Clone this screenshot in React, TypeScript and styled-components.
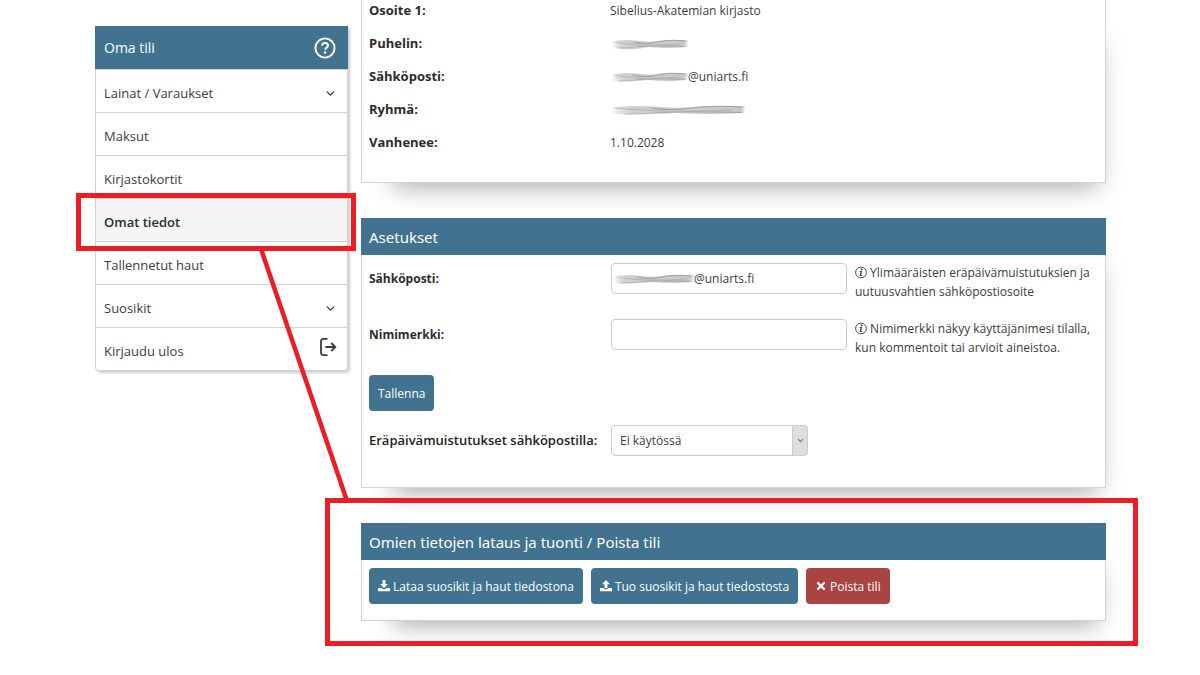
import React from "react";
import styled, { createGlobalStyle, css } from "styled-components";
import { FaTimes } from "react-icons/fa";
import { ChevronDown } from "lucide-react";

const blue = "#417391";
const line = "#d2d2d2";
const red = "#ee1c24";

const GlobalStyle = createGlobalStyle`
  *, *::before, *::after { box-sizing: border-box; }
  body {
    margin: 0;
    background: #fff;
    color: #3c3c3c;
    font-family: "Open Sans", "Noto Sans", sans-serif;
    font-size: 12px;
    line-height: 19px;
  }
  button, input, select { font: inherit; color: inherit; }
`;

const Page = styled.div`
  display: grid;
  grid-template-columns: 253px minmax(0, 1fr);
  gap: 13px;
  align-items: start;
  padding: 0 94px 18px 95px;
  overflow: hidden;
`;

const Sidebar = styled.nav`
  margin-top: 26px;
  border: 1px solid ${line};
  border-top: 0;
  border-radius: 0 0 4px 4px;
  box-shadow: 2px 2px 3px rgba(0, 0, 0, 0.2);
  font-size: 13px;
`;

const SidebarHeader = styled.div`
  display: flex;
  align-items: center;
  justify-content: space-between;
  height: 43px;
  margin: 0 -1px;
  padding: 0 12px 0 9px;
  background: ${blue};
  color: #fff;
  font-size: 14px;
`;

const HelpButton = styled.button`
  display: flex;
  padding: 0;
  border: 0;
  background: none;
  color: #fff;
`;

const MenuList = styled.ul`
  margin: 0;
  padding: 0;
  list-style: none;
`;

const MenuItem = styled.li<{ $active?: boolean }>`
  position: relative;
  border-top: 1px solid ${line};
  ${(p) => p.$active && css`
    background: #f5f5f5;
    font-weight: 600;
    color: #2c2c2c;
  `}
`;

const MenuLink = styled.a`
  display: flex;
  align-items: center;
  justify-content: space-between;
  height: 42px;
  padding: 4px 10px 0 8px;
  color: inherit;
  text-decoration: none;
`;

const OutIcon = styled.svg`
  margin-bottom: 8px;
`;

const ItemMark = styled.span`
  position: absolute;
  inset: -6px -9px -10px -20px;
  z-index: 2;
  border: 5px solid ${red};
  pointer-events: none;
`;

const Connector = styled.svg`
  position: absolute;
  top: 50px;
  left: 160px;
  z-index: 2;
  pointer-events: none;
`;

const Content = styled.main`
  min-width: 0;
`;

const Panel = styled.section<{ $continued?: boolean }>`
  position: relative;
  margin-bottom: 35px;
  border: 1px solid ${line};
  ${(p) => p.$continued && "border-top: 0;"}
  background: #fff;
  box-shadow: 12px 24px 24px -20px rgba(0, 0, 0, 0.34);
`;

const PanelMark = styled.span`
  position: absolute;
  inset: -26px -33px -26px -37px;
  z-index: 2;
  border: 5px solid ${red};
  pointer-events: none;
`;

const PanelTitle = styled.h2`
  margin: -1px -1px 0;
  padding: 6px 8px 5px;
  background: ${blue};
  color: #fff;
  font-family: "Noto Sans", "Open Sans", sans-serif;
  font-size: 15px;
  font-weight: 400;
  line-height: 26px;
`;

const Details = styled.dl`
  display: grid;
  grid-template-columns: 241px minmax(0, 1fr);
  grid-auto-rows: 33px;
  margin: 0;
  padding: 0 7px 17px;
  line-height: 21px;
`;

const Term = styled.dt`
  color: #2c2c2c;
  font-size: 13px;
  font-weight: 700;
`;

const Value = styled.dd`
  display: flex;
  align-items: flex-start;
  margin: 0;
  svg { margin-top: 3px; }
`;

const Settings = styled.form`
  display: grid;
  grid-template-columns: 242px minmax(0, 1fr);
  row-gap: 14px;
  padding: 8px 7px 31px;
`;

const FieldLabel = styled.label<{ $large?: boolean }>`
  padding-top: 6px;
  color: ${(p) => (p.$large ? "#222" : "#2c2c2c")};
  font-size: ${(p) => (p.$large ? 13 : 12)}px;
  font-weight: ${(p) => (p.$large ? 600 : 700)};
`;

const FieldRow = styled.div`
  display: grid;
  grid-template-columns: 236px minmax(0, 1fr);
  gap: 8px;
  min-height: 42px;
  align-items: start;
`;

const InputWrap = styled.div`
  position: relative;
  display: flex;
`;

const TextInput = styled.input<{ $masked?: boolean }>`
  width: 100%;
  height: 31px;
  padding: 0 8px 0 ${(p) => (p.$masked ? 82 : 8)}px;
  border: 1px solid #ccc;
  border-radius: 4px;
  background: #fff;
`;

const InputSmudge = styled.span`
  position: absolute;
  top: 8px;
  left: 1px;
  display: flex;
`;

const Hint = styled.p`
  margin: 0;
  svg { vertical-align: -2px; }
`;

const SelectWrap = styled.div`
  position: relative;
  width: 197px;
`;

const Select = styled.select`
  display: block;
  width: 100%;
  height: 31px;
  padding: 0 24px 0 8px;
  border: 1px solid #ccc;
  border-radius: 4px;
  appearance: none;
  background: #fff;
`;

const SelectArrow = styled.span`
  position: absolute;
  top: 0;
  right: 0;
  bottom: 0;
  display: flex;
  align-items: center;
  justify-content: center;
  width: 16px;
  border: 1px solid #ccc;
  border-radius: 0 4px 4px 0;
  background: #dedede;
  color: #777;
  pointer-events: none;
`;

const Button = styled.button<{ $danger?: boolean }>`
  display: inline-flex;
  align-items: center;
  gap: 3px;
  height: 36px;
  padding: 0 9px;
  border: 0;
  border-radius: 4px;
  background: ${(p) => (p.$danger ? "#a94442" : blue)};
  color: #fff;
`;

const FullRow = styled.div`
  grid-column: 1 / -1;
  display: flex;
`;

const Actions = styled.div`
  display: flex;
  flex-wrap: wrap;
  gap: 8px;
  padding: 8px 7px 16px;
`;

function HelpIcon() {
  return (
    <svg width="22" height="22" viewBox="0 0 22 22" fill="none" stroke="currentColor" aria-hidden="true">
      <circle cx="11" cy="11" r="9.6" strokeWidth="1.9" />
      <path d="M8 8.6c.2-1.8 1.4-2.7 3-2.7 1.8 0 3 1 3 2.5 0 2.2-2.9 2.2-2.9 4.4" strokeWidth="2" />
      <circle cx="11.1" cy="15.5" r="1.3" fill="currentColor" stroke="none" />
    </svg>
  );
}

function SignOutIcon() {
  return (
    <OutIcon width="18" height="20" viewBox="0 0 18 20" fill="none" stroke="currentColor" aria-hidden="true">
      <path d="M8.5 1.9H4.5Q2 1.9 2 4.5v11Q2 18.1 4.5 18.1h4" strokeWidth="1.8" />
      <path d="M6.5 10h10M12.3 6l4 4-4 4" strokeWidth="1.8" />
    </OutIcon>
  );
}

function InfoIcon() {
  return (
    <svg width="12" height="13" viewBox="0 0 12 13" fill="none" stroke="currentColor" aria-hidden="true">
      <circle cx="6" cy="6.5" r="5.4" strokeWidth="0.9" />
      <path d="M4.8 5.5h1.5L5.4 9.4h1.4" strokeWidth="1.2" />
      <circle cx="6.7" cy="3.5" r="0.9" fill="currentColor" stroke="none" />
    </svg>
  );
}

function TrayIcon({ up }: { up?: boolean }) {
  return (
    <svg width="12" height="12" viewBox="0 0 12 12" fill="currentColor" aria-hidden="true">
      <path d={up ? "M6 0L10 4.2H7.4V8H4.6V4.2H2z" : "M4.6 0h2.8v4H10L6 8 2 4h2.6z"} />
      <path d="M0 8h3.4L5 9.2h2L8.6 8H12v3.2H0z" />
    </svg>
  );
}

function Smudge({ width, id, head }: { width: number; id: string; head?: boolean }) {
  const w = (f: number) => Math.round(width * f);
  return (
    <svg width={width} height="16" viewBox={`0 0 ${width} 16`} fill="none" aria-hidden="true">
      <defs>
        <filter id={id} x="-5%" y="-20%" width="110%" height="140%">
          <feGaussianBlur stdDeviation="1.4 0.7" />
        </filter>
        <linearGradient id={`${id}-fade`} x1="0" x2="1" y1="0" y2="0">
          <stop offset="0" stopColor="#ccc" stopOpacity="0.3" />
          <stop offset="0.15" stopColor="#d0d0d0" />
          <stop offset="1" stopColor="#c8c8c8" />
        </linearGradient>
      </defs>
      <g filter={`url(#${id})`}>
        <path
          fill={`url(#${id}-fade)`}
          d={`M3 5Q${w(0.2)} 3 ${w(0.38)} 5T${w(0.7)} 4L${width - 1} 4L${width - 2} 11Q${w(0.7)} 13 ${w(0.5)} 11Q${w(0.25)} ${head ? 15 : 13} 4 12z`}
        />
        <path
          stroke="#a2a2a2"
          strokeWidth="1.1"
          d={`M${w(0.3)} 6Q${w(0.45)} 9 ${w(0.6)} 6T${width - 3} 5M${w(0.35)} 10.5Q${w(0.6)} 9 ${width - 3} 10.5`}
        />
        <path
          stroke="#b2b2b2"
          strokeWidth="0.9"
          d={`M5 6Q${w(0.12)} 7 ${w(0.3)} 8.5T${w(0.9)} 8M${w(0.1)} 12Q${w(0.25)} 12.5 ${w(0.4)} 10`}
        />
      </g>
    </svg>
  );
}

const menu: { label: string; active?: boolean; icon?: "open" | "out" }[] = [
  { label: "Lainat / Varaukset", icon: "open" },
  { label: "Maksut" },
  { label: "Kirjastokortit" },
  { label: "Omat tiedot", active: true },
  { label: "Tallennetut haut" },
  { label: "Suosikit", icon: "open" },
  { label: "Kirjaudu ulos", icon: "out" },
];

export default function App() {
  return (
    <>
      <GlobalStyle />
      <Page>
        <Sidebar aria-label="Oma tili">
          <SidebarHeader>
            Oma tili
            <HelpButton type="button" aria-label="Ohje"><HelpIcon /></HelpButton>
          </SidebarHeader>
          <MenuList>
            {menu.map((m) => (
              <MenuItem key={m.label} $active={m.active}>
                <MenuLink href="#">
                  {m.label}
                  {m.icon === "open" && <ChevronDown size={13} strokeWidth={2.6} />}
                  {m.icon === "out" && <SignOutIcon />}
                </MenuLink>
                {m.active && (
                  <>
                    <ItemMark />
                    <Connector width="96" height="252" viewBox="0 0 96 252">
                      <path d="M5 0L91 252" stroke={red} strokeWidth="4.5" />
                    </Connector>
                  </>
                )}
              </MenuItem>
            ))}
          </MenuList>
        </Sidebar>
        <Content>
          <Panel $continued>
            <Details>
              <Term>Osoite 1:</Term>
              <Value>Sibelius-Akatemian kirjasto</Value>
              <Term>Puhelin:</Term>
              <Value><Smudge width={78} id="phone" head /></Value>
              <Term>Sähköposti:</Term>
              <Value><Smudge width={78} id="mail" />@uniarts.fi</Value>
              <Term>Ryhmä:</Term>
              <Value><Smudge width={135} id="group" /></Value>
              <Term>Vanhenee:</Term>
              <Value>1.10.2028</Value>
            </Details>
          </Panel>
          <Panel>
            <PanelTitle>Asetukset</PanelTitle>
            <Settings onSubmit={(e) => e.preventDefault()}>
              <FieldLabel htmlFor="email">Sähköposti:</FieldLabel>
              <FieldRow>
                <InputWrap>
                  <TextInput id="email" defaultValue="@uniarts.fi" $masked />
                  <InputSmudge><Smudge width={82} id="account" /></InputSmudge>
                </InputWrap>
                <Hint><InfoIcon /> Ylimääräisten eräpäivämuistutuksien ja uutuusvahtien sähköpostiosoite</Hint>
              </FieldRow>
              <FieldLabel htmlFor="nick">Nimimerkki:</FieldLabel>
              <FieldRow>
                <InputWrap><TextInput id="nick" /></InputWrap>
                <Hint><InfoIcon /> Nimimerkki näkyy käyttäjänimesi tilalla, kun kommentoit tai arvioit aineistoa.</Hint>
              </FieldRow>
              <FullRow><Button type="submit">Tallenna</Button></FullRow>
              <FieldLabel htmlFor="reminders" $large>Eräpäivämuistutukset sähköpostilla:</FieldLabel>
              <SelectWrap>
                <Select id="reminders"><option>Ei käytössä</option></Select>
                <SelectArrow><ChevronDown size={9} strokeWidth={3} /></SelectArrow>
              </SelectWrap>
            </Settings>
          </Panel>
          <Panel>
            <PanelTitle>Omien tietojen lataus ja tuonti / Poista tili</PanelTitle>
            <Actions>
              <Button type="button"><TrayIcon />Lataa suosikit ja haut tiedostona</Button>
              <Button type="button"><TrayIcon up />Tuo suosikit ja haut tiedostosta</Button>
              <Button type="button" $danger><FaTimes size={12} />Poista tili</Button>
            </Actions>
            <PanelMark />
          </Panel>
        </Content>
      </Page>
    </>
  );
}
